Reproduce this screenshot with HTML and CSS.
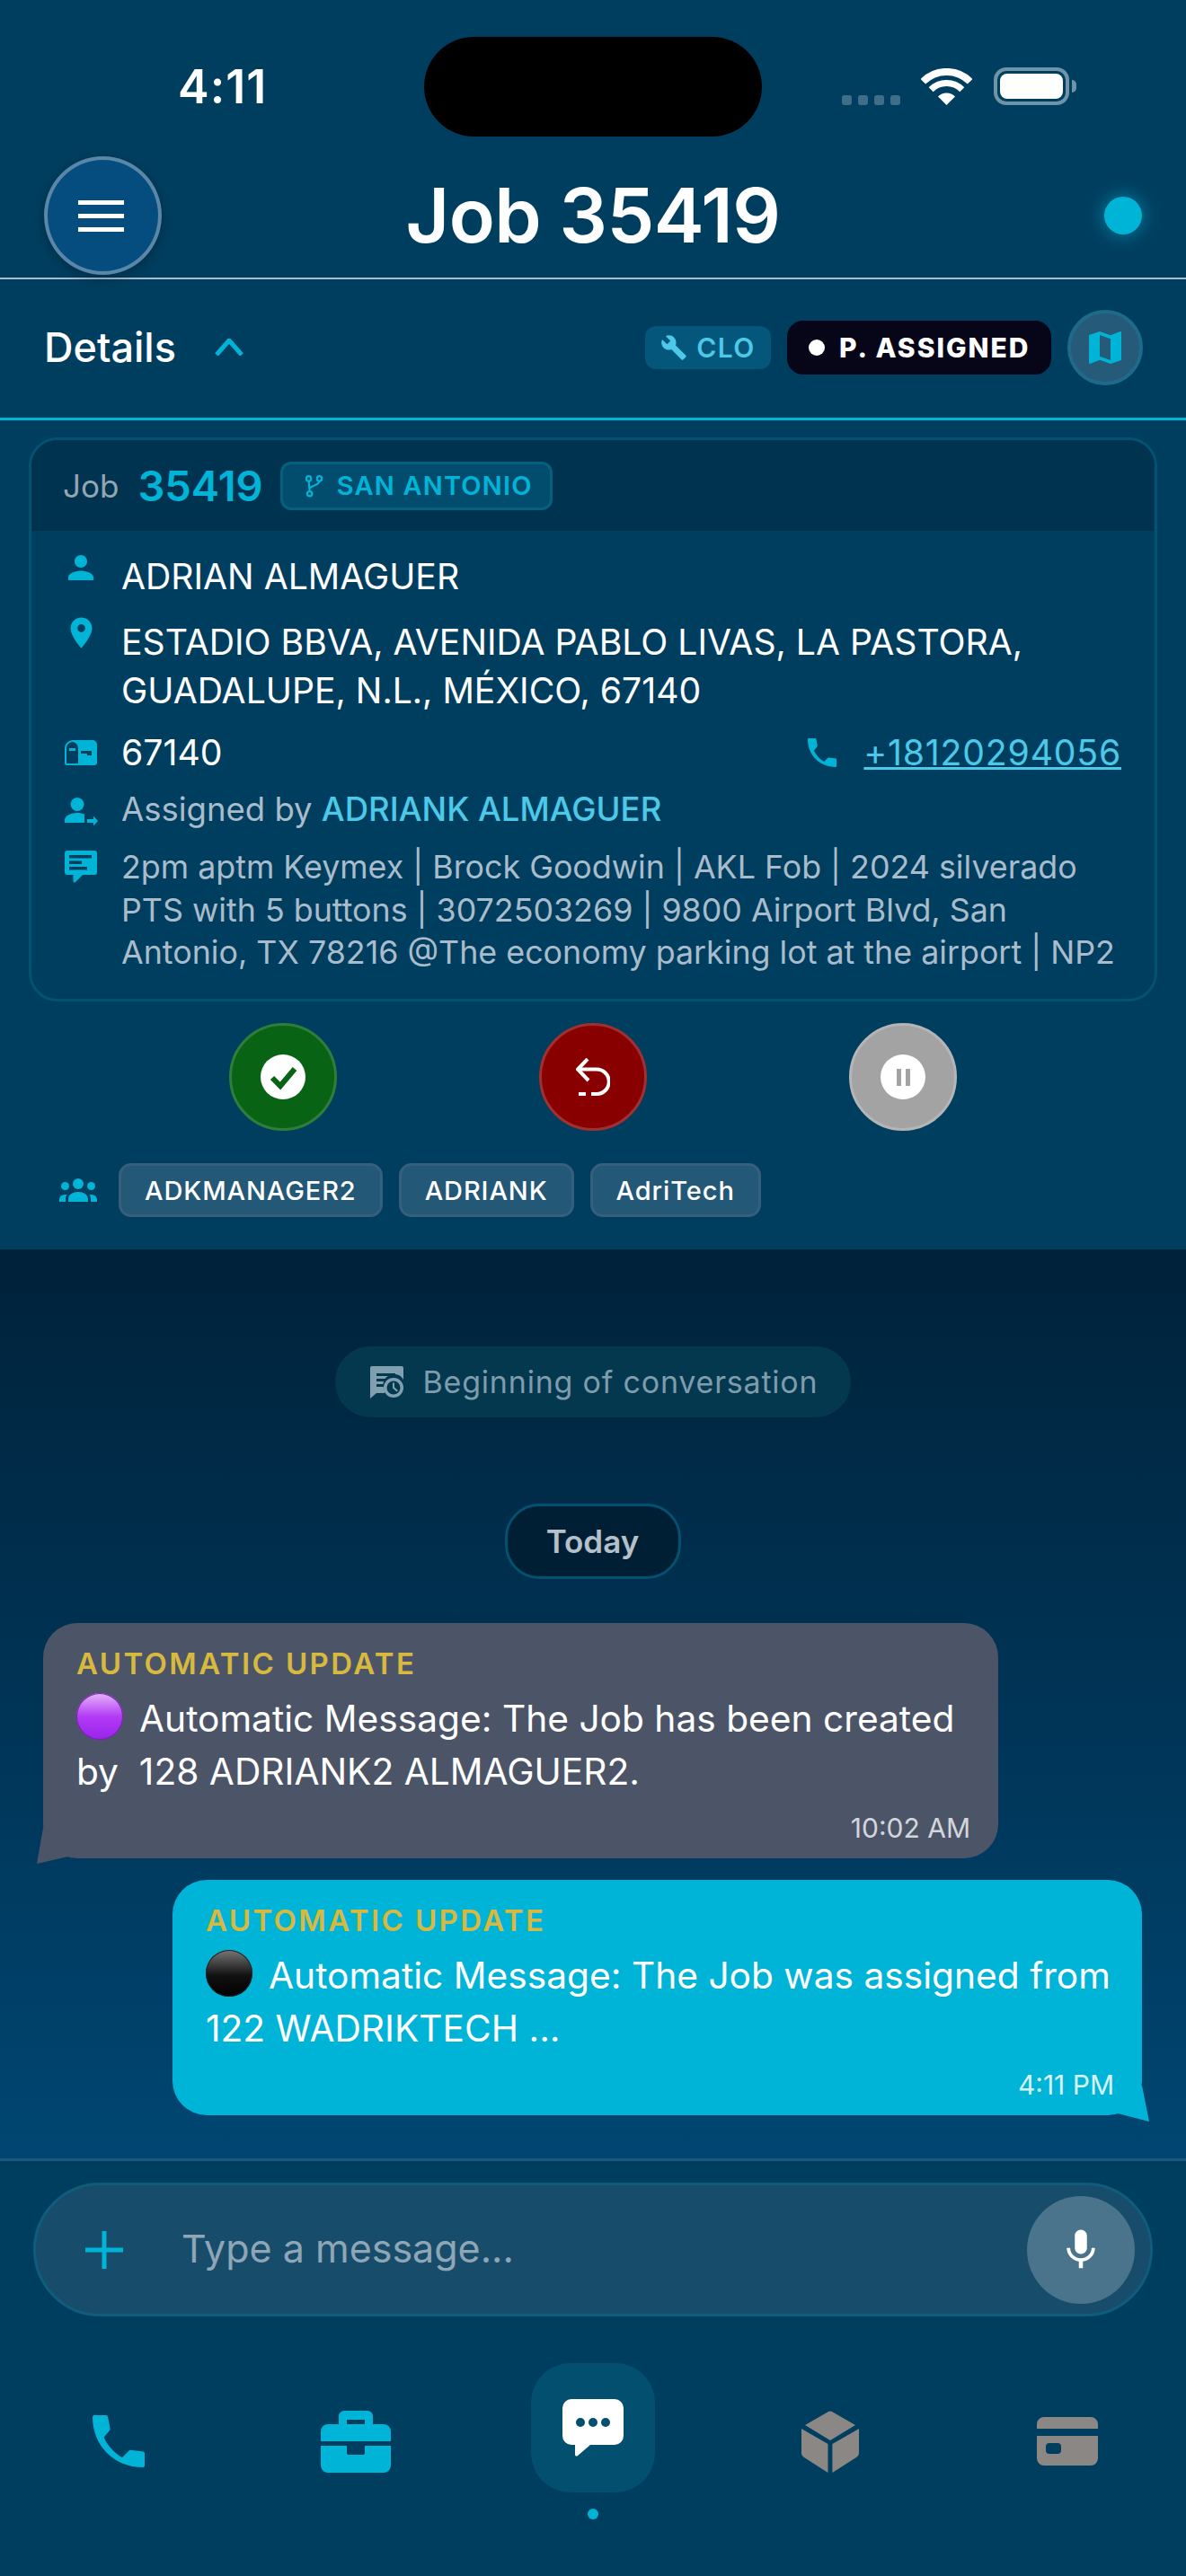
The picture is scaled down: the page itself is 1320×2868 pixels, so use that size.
FILE: index.html
```html
<!DOCTYPE html>
<html lang="en">
<head>
<meta charset="utf-8">
<title>Job 35419</title>
<link rel="stylesheet" href="styles.css">
</head>
<body>
<svg class="defs" width="0" height="0" aria-hidden="true">
  <symbol id="i-phone" viewBox="0 0 58 58"><path d="M2 0H15a2 2 0 0 1 2 1.7L19.500 14.500c.2 1-.1 2-.8 2.700L12.700 24.500C16 33 24 42 33 47l7.500-7.500c.6-.6 1.400-.8 2.200-.7l13.500 1.800c1 .1 1.800 1 1.800 2V56a2 2 0 0 1-2 2C24 58 0 34 0 2a2 2 0 0 1 2-2z"/></symbol>
</svg>

<div class="status">
  <div class="status-left"><span class="clock">4:11</span></div>
  <div class="notch"></div>
  <div class="status-right">
    <div class="signal"><i></i><i></i><i></i><i></i></div>
    <svg class="wifi" viewBox="0 0 57 41"><path d="M2.300 14.800A37 37 0 0 1 54.700 14.800" fill="none" stroke="#fff" stroke-width="8"/><path d="M11.200 23.700A24.500 24.500 0 0 1 45.800 23.700" fill="none" stroke="#fff" stroke-width="7"/><path d="M28.500 41L19 31.500A13.500 13.500 0 0 1 38 31.500Z" fill="#fff"/></svg>
    <div class="battery"><div class="battery-fill"></div></div>
    <div class="battery-cap"></div>
  </div>
</div>

<header class="topbar">
  <button class="menu-btn" aria-label="Menu"><span></span><span></span><span></span></button>
  <h1 class="title">Job 35419</h1>
  <div class="live-dot"></div>
</header>

<section class="details-bar">
  <span class="details-label">Details</span>
  <svg class="chevron" viewBox="0 0 32 19"><path d="M2 18L16 2L30 18" fill="none" stroke="#00b4d8" stroke-width="5"/></svg>
  <div class="details-right">
    <span class="tag-clo">
      <svg class="icon-wrench" viewBox="0 0 24 24"><path d="M22.700 19l-9.100-9.100c.9-2.300.4-5-1.500-6.900-2-2-5-2.400-7.400-1.300L9 6 6 9 1.600 4.700C.4 7.100.9 10.100 2.900 12.100c1.900 1.900 4.600 2.400 6.900 1.500l9.100 9.100c.4.4 1 .4 1.400 0l2.300-2.300c.5-.4.500-1.100.1-1.400z"/></svg>
      CLO
    </span>
    <span class="tag-status"><i></i>P. ASSIGNED</span>
    <button class="map-btn" aria-label="Map"><svg viewBox="0 0 24 24"><path d="M20.500 3l-.16.03L15 5.100 9 3 3.360 4.900c-.21.07-.36.25-.36.48V20.500c0 .28.22.5.5.5l.16-.03L9 18.900l6 2.100 5.640-1.900c.21-.07.36-.25.36-.48V3.500c0-.28-.22-.5-.5-.5zM15 19l-6-2.110V5l6 2.110V19z"/></svg></button>
  </div>
</section>

<section class="panel">
  <article class="card">
    <div class="card-head">
      <span class="job-word">Job</span>
      <span class="job-num">35419</span>
      <span class="branch">
        <svg viewBox="0 0 24 24"><circle cx="7" cy="4.500" r="2.500"/><circle cx="18" cy="4.500" r="2.500"/><circle cx="8" cy="20" r="2.500"/><path d="M7 7L8 17.500M18 7C18 12 9 11 8 15"/></svg>
        SAN ANTONIO
      </span>
    </div>
    <div class="card-body">
      <div class="row row-name">
        <span class="ico"><svg width="42" height="42" viewBox="0 0 24 24"><path d="M12 12c2.210 0 4-1.790 4-4s-1.790-4-4-4-4 1.790-4 4 1.790 4 4 4zm0 2c-2.670 0-8 1.340-8 4v2h16v-2c0-2.660-5.330-4-8-4z"/></svg></span>
        <span class="t-main">ADRIAN ALMAGUER</span>
      </div>
      <div class="row row-addr">
        <span class="ico"><svg width="41" height="41" viewBox="0 0 24 24"><path d="M12 2C8.130 2 5 5.130 5 9c0 5.250 7 13 7 13s7-7.750 7-13c0-3.870-3.130-7-7-7zm0 9.500c-1.380 0-2.500-1.120-2.500-2.500s1.120-2.500 2.500-2.500 2.500 1.120 2.500 2.500-1.120 2.500-2.500 2.500z"/></svg></span>
        <span class="t-main">ESTADIO BBVA, AVENIDA PABLO LIVAS, LA PASTORA,<br>GUADALUPE, N.L., MÉXICO, 67140</span>
      </div>
      <div class="row row-zip">
        <span class="ico"><svg width="36" height="28" viewBox="0 0 36 28"><path d="M10 0H31a5 5 0 0 1 5 5V25a3 3 0 0 1-3 3H2a2 2 0 0 1-2-2V9a9 9 0 0 1 9-9z"/><path class="cut" d="M9 2a7 7 0 0 0-7 7V26H15V9a7 7 0 0 0-6-7z"/><path d="M5 9h7v3H5z"/><path class="cut" d="M18 12H30V17H25V15H18z"/></svg></span>
        <span class="t-main">67140</span>
        <span class="phone-wrap">
          <svg class="icon-phone-sm"><use href="#i-phone"/></svg>
          <a class="phone-link" href="#">+18120294056</a>
        </span>
      </div>
      <div class="row row-assign">
        <span class="ico"><svg width="37" height="32" viewBox="0 0 37 32"><circle cx="14" cy="7.500" r="7.500"/><path d="M0 28v-3c0-5 7-8 14-8 3.500 0 6 .6 8 1.600V28z"/><path d="M25 24H32V20.500L37 26L32 31.500V28H25z"/></svg></span>
        <span class="t-sub t-assign">Assigned by <span class="t-link">ADRIANK ALMAGUER</span></span>
      </div>
      <div class="row row-note">
        <span class="ico"><svg width="36" height="36" viewBox="0 0 36 36"><path d="M3 0H33a3 3 0 0 1 3 3V24a3 3 0 0 1-3 3H20L12 35c-1 1-2.500.4-2.500-1V27H3a3 3 0 0 1-3-3V3a3 3 0 0 1 3-3z"/><path class="cut" d="M5 5H30V8.500H5zM5 11.500H19V15H5zM5 18H25V21.500H5z"/></svg></span>
        <span class="t-sub t-note">2pm aptm Keymex | Brock Goodwin | AKL Fob | 2024 silverado<br>PTS with 5 buttons | 3072503269 | 9800 Airport Blvd, San<br>Antonio, TX 78216 @The economy parking lot at the airport | NP2</span>
      </div>
    </div>
  </article>

  <div class="actions">
    <button class="act act-ok" aria-label="Confirm"><span class="act-inner"><svg viewBox="0 0 50 50"><path d="M13 26L22 35L38 16" fill="none" stroke="#086314" stroke-width="6"/></svg></span></button>
    <button class="act act-back" aria-label="Decline"><svg viewBox="0 0 38 42"><path d="M13 1L2 12.500L14 25" fill="none" stroke="#fff" stroke-width="4"/><path d="M2 12.500H23a13.500 13.500 0 0 1 0 27.500H17" fill="none" stroke="#fff" stroke-width="4"/><path d="M3 38h8v4H3z" fill="#fff"/></svg></button>
    <button class="act act-hold" aria-label="Hold"><span class="act-inner"><i></i><i></i></span></button>
  </div>

  <div class="people">
    <svg class="icon-group" viewBox="0 0 42 26"><circle cx="21" cy="6" r="6"/><circle cx="6.500" cy="8.500" r="4.500"/><circle cx="35.500" cy="8.500" r="4.500"/><path d="M10 26v-3c0-5 5-8 11-8s11 3 11 8v3zM0 26v-2c0-4 3-6 7-6 .6 0 1 0 1.500.1-.9 1.300-1.500 3-1.500 4.900v3zM42 26v-2c0-4-3-6-7-6-.6 0-1 0-1.500.1.900 1.300 1.500 3 1.500 4.900v3z"/></svg>
    <span class="chip">ADKMANAGER2</span>
    <span class="chip">ADRIANK</span>
    <span class="chip">AdriTech</span>
  </div>
</section>

<main class="chat">
  <div class="chat-start">
    <svg viewBox="0 0 37 36"><path d="M2 0H35a2 2 0 0 1 2 2V15A12 12 0 0 0 16 27c0 1 .1 2 .4 3H7L0 36V2a2 2 0 0 1 2-2z"/><path class="cut" d="M7 8H28V11H7zM7 14H24V17H7zM7 20H16V23H7z"/><circle cx="26" cy="24" r="11"/><circle class="cut" cx="26" cy="24" r="7.500"/><path d="M25 18.500H27V23.500L31 27L29.500 28.500L25 24.500z"/></svg>
    <span>Beginning of conversation</span>
  </div>
  <div class="chat-day">Today</div>

  <div class="bubble bubble-in">
    <div class="b-label">AUTOMATIC UPDATE</div>
    <div class="b-text"><i class="orb orb-purple"></i>Automatic Message: The Job has been created<br>by&nbsp; 128 ADRIANK2 ALMAGUER2.</div>
    <div class="b-time">10:02 AM</div>
    <svg class="tail tail-in" viewBox="0 0 50 40"><path d="M7 0L0 40L35 32L50 34V0Z" fill="#4c5567"/></svg>
  </div>

  <div class="bubble bubble-out">
    <div class="b-label">AUTOMATIC UPDATE</div>
    <div class="b-text"><i class="orb orb-black"></i>Automatic Message: The Job was assigned from<br>122 WADRIKTECH ...</div>
    <div class="b-time">4:11 PM</div>
    <svg class="tail tail-out" viewBox="0 0 50 40"><path d="M42 0L50 40L15 31L0 33V0Z" fill="#00b4d8"/></svg>
  </div>
</main>

<footer class="bottom">
  <div class="composer">
    <svg class="plus" viewBox="0 0 42 42"><path d="M21 0V42M0 21H42" stroke="#00b4d8" stroke-width="5"/></svg>
    <span class="placeholder">Type a message...</span>
    <button class="mic" aria-label="Voice"><svg viewBox="0 0 24 24"><path d="M12 14c1.660 0 3-1.340 3-3V5c0-1.660-1.340-3-3-3S9 3.340 9 5v6c0 1.660 1.340 3 3 3zm5.300-3c0 3-2.540 5.100-5.300 5.100S6.700 14 6.700 11H5c0 3.410 2.720 6.230 6 6.720V21h2v-3.280c3.280-.48 6-3.300 6-6.720h-1.700z"/></svg></button>
  </div>
  <nav class="nav">
    <div class="nav-item"><svg class="n-phone on"><use href="#i-phone"/></svg></div>
    <div class="nav-item"><svg class="n-case on" viewBox="0 0 78 69"><path fill-rule="evenodd" d="M20 15V6a6 6 0 0 1 6-6H52a6 6 0 0 1 6 6V15H70a8 8 0 0 1 8 8V34H0V23a8 8 0 0 1 8-8zM29 15H49V10H29z"/><path d="M0 39H29V47a2 2 0 0 0 2 2H47a2 2 0 0 0 2-2V39H78V61a8 8 0 0 1-8 8H8a8 8 0 0 1-8-8z"/></svg></div>
    <div class="nav-item">
      <div class="nav-tile"><svg class="n-chat" viewBox="0 0 68 64"><path fill="#fff" d="M10 0H58a10 10 0 0 1 10 10V41a10 10 0 0 1-10 10H31L17 63c-1 1-3 .5-3-1V51H10A10 10 0 0 1 0 41V10A10 10 0 0 1 10 0z"/><circle cx="20" cy="26" r="5"/><circle cx="34" cy="26" r="5"/><circle cx="48" cy="26" r="5"/></svg></div>
      <div class="nav-dot"></div>
    </div>
    <div class="nav-item"><svg class="n-box off" viewBox="0 0 64 69"><path d="M30 1a4 4 0 0 1 4 0L60 16 32 33 4 16zM0 20L29.500 37V69L3 52c-2-1.300-3-3-3-5zM34.400 37L64 20V47c0 2-1 3.700-3 5L34.400 69z"/></svg></div>
    <div class="nav-item"><svg class="n-card off" viewBox="0 0 68 54"><path fill-rule="evenodd" d="M8 0H60a8 8 0 0 1 8 8V13H0V8a8 8 0 0 1 8-8zM0 21H68V46a8 8 0 0 1-8 8H8a8 8 0 0 1-8-8zM14 29a4 4 0 0 0-4 4V37a4 4 0 0 0 4 4H23a4 4 0 0 0 4-4V33a4 4 0 0 0-4-4z"/></svg></div>
  </nav>
</footer>
</body>
</html>
```

FILE: styles.css
```css
* { box-sizing: border-box; }
html, body { margin: 0; padding: 0; }
body {
  width: 1320px;
  height: 2868px;
  display: flex;
  flex-direction: column;
  background: #003e5f;
  color: #fff;
  font-family: Inter, "Liberation Sans", sans-serif;
  overflow: hidden;
}
button { border: 0; padding: 0; font: inherit; background: none; }
.defs { position: absolute; }

/* status */
.status { height: 170px; padding-top: 41px; display: flex; flex: none; }
.status-left { width: 472px; height: 111px; padding-left: 198px; display: flex; align-items: center; }
.clock { font-size: 52px; font-weight: 600; line-height: 1; letter-spacing: 1px; }
.notch { width: 376px; height: 111px; background: #000; border-radius: 56px; }
.status-right { height: 76px; padding-left: 89px; display: flex; align-items: flex-end; }
.signal { display: flex; gap: 7px; }
.signal i { width: 11px; height: 11px; border-radius: 3px; background: #3f6e88; }
.wifi { width: 57px; height: 41px; margin-left: 23px; display: block; }
.battery { width: 84px; height: 42px; margin-left: 24px; border: 4px solid #6f93a8; border-radius: 14px; padding: 3px; }
.battery-fill { width: 100%; height: 100%; background: #fff; border-radius: 8px; }
.battery-cap { width: 5px; height: 14px; margin: 0 0 14px 3px; background: #6f93a8; border-radius: 0 5px 5px 0; }

/* header */
.topbar { flex: none; height: 141px; padding: 4px 49px 3px; display: grid; grid-template-columns: 1fr auto 1fr; align-items: center; border-bottom: 2px solid #a9bccb; }
.menu-btn { width: 131px; height: 132px; border-radius: 50%; background: #064d7f; border: 4px solid #5a86a8; box-shadow: 0 4px 14px rgba(0,0,0,.25); display: flex; flex-direction: column; align-items: center; justify-content: center; gap: 10px; }
.menu-btn span { width: 51px; height: 5px; background: #fff; margin-right: 5px; }
.title { margin: 0; font-size: 84px; font-weight: 600; line-height: 1; letter-spacing: -.6px; }
.live-dot { justify-self: end; width: 42px; height: 42px; border-radius: 50%; background: #00b4d8; box-shadow: 0 0 18px 4px rgba(0,180,216,.4); }

/* details bar */
.details-bar { flex: none; height: 157px; padding: 0 48px 3px 49px; display: flex; align-items: center; border-bottom: 3px solid #00b4d8; }
.details-label { font-size: 45px; font-weight: 500; }
.chevron { width: 32px; height: 19px; margin-left: 43px; }
.details-right { margin-left: auto; display: flex; align-items: center; gap: 18px; }
.tag-clo { width: 140px; height: 48px; border-radius: 12px; background: #04567a; color: #4cc9e8; font-size: 30px; font-weight: 600; letter-spacing: 1.4px; display: flex; align-items: center; justify-content: center; gap: 10px; }
.icon-wrench { width: 30px; height: 30px; fill: #4cc9e8; }
.tag-status { width: 294px; height: 60px; border-radius: 18px; background: #070619; font-size: 30px; font-weight: 800; letter-spacing: 2px; display: flex; align-items: center; padding-left: 24px; white-space: nowrap; }
.tag-status i { width: 18px; height: 18px; border-radius: 50%; background: #fff; margin-right: 16px; }
.map-btn { width: 84px; height: 84px; border-radius: 50%; background: #255a78; border: 4px solid #1f6a8a; display: flex; align-items: center; justify-content: center; }
.map-btn svg { width: 48px; height: 48px; fill: #00b4d8; }

/* panel & card */
.panel { flex: none; height: 923px; padding: 19px 32px 36px; background: #003e5f; }
.card { height: 628px; border: 3px solid #045272; border-radius: 32px; overflow: hidden; }
.card-head { height: 101px; background: #003350; display: flex; align-items: center; padding: 0 0 0 35px; }
.job-word { font-size: 35px; color: #92a6b4; }
.job-num { font-size: 47px; font-weight: 600; color: #00b4d8; margin-left: 21px; }
.branch { height: 54px; margin-left: 19px; border-radius: 12px; background: #024d6d; border: 3px solid #05607f; color: #00b4d8; font-size: 29px; font-weight: 600; letter-spacing: 1.2px; display: flex; align-items: center; padding: 0 19px 0 21px; gap: 13px; }
.branch svg { width: 26px; height: 26px; fill: none; stroke: #00b4d8; stroke-width: 2; }
.card-body { padding: 24px 37px 0; }
.row { display: flex; align-items: flex-start; }
.row-addr { margin-top: 19px; }
.row-zip { margin-top: 15px; }
.row-assign { margin-top: 12px; }
.row-note { margin-top: 17px; }
.ico { flex: none; width: 36px; margin-right: 27px; display: flex; justify-content: center; }
.ico svg { fill: #00b4d8; display: block; flex: none; }
.ico svg .cut { fill: #003e5f; }
.row-name .ico { margin-top: -4px; }
.row-addr .ico { margin-top: -4px; }
.row-zip .ico { margin-top: 13px; }
.row-assign .ico { margin-top: 11px; }
.row-note .ico { margin-top: 5px; }
.t-main { font-size: 39.200px; line-height: 54px; font-weight: 400; white-space: nowrap; }
.t-sub { font-size: 35.800px; line-height: 47.500px; color: #a9bccb; white-space: nowrap; }
.t-assign { font-size: 36.500px; line-height: 48px; }
.t-link { color: #4cc9e8; font-weight: 500; }
.phone-wrap { margin-left: auto; display: flex; align-items: center; }
.icon-phone-sm { width: 32px; height: 32px; fill: #00b4d8; margin-right: 30px; }
.phone-link { font-size: 39.200px; line-height: 54px; color: #4cc9e8; font-weight: 400; letter-spacing: .8px; text-decoration: underline; text-decoration-thickness: 3px; }

.actions { margin-top: 24px; display: flex; justify-content: center; gap: 225px; }
.act { width: 120px; height: 120px; border-radius: 50%; display: flex; align-items: center; justify-content: center; }
.act-ok { background: #086314; border: 3px solid #2f7d3a; }
.act-back { background: #890000; border: 3px solid #a13030; }
.act-back svg { width: 38px; height: 42px; }
.act-hold { background: #a3a3a3; border: 3px solid #b5b5b5; }
.act-inner { width: 50px; height: 50px; border-radius: 50%; background: #fff; display: flex; align-items: center; justify-content: center; gap: 5px; }
.act-inner svg { width: 50px; height: 50px; }
.act-inner i { width: 5px; height: 19px; background: #a3a3a3; }

.people { margin-top: 36px; display: flex; align-items: center; gap: 18px; padding-left: 34px; }
.icon-group { width: 42px; height: 26px; fill: #00b4d8; margin-right: 6px; }
.chip { height: 60px; padding: 0 26px; border-radius: 14px; background: #235876; border: 3px solid #365f7c; font-size: 29px; font-weight: 500; letter-spacing: .9px; display: flex; align-items: center; }

/* chat */
.chat { flex: 1; min-height: 0; padding: 108px 49px 0 48px; background: linear-gradient(#00223a, #004672); display: flex; flex-direction: column; align-items: center; }
.chat-start { width: 574px; height: 79px; border-radius: 39px; background: #03384f; color: #7f9cac; font-size: 34px; letter-spacing: .8px; display: flex; align-items: center; padding-left: 39px; gap: 22px; white-space: nowrap; }
.chat-start svg { width: 37px; height: 36px; fill: #80a0b0; flex: none; }
.chat-start .cut { fill: #03384f; }
.chat-day { margin-top: 96px; width: 196px; height: 84px; border-radius: 38px; background: #001f35; border: 3px solid #02526f; color: #b5c0c8; font-size: 35px; font-weight: 600; display: flex; align-items: center; justify-content: center; }
.bubble { position: relative; height: 262px; border-radius: 38px; padding: 25px 31px 0 37px; align-self: flex-start; }
.bubble-in { margin-top: 49px; width: 1063px; background: #4c5567; }
.bubble-out { margin-top: 24px; width: 1079px; background: #00b4d8; align-self: flex-end; }
.b-label { height: 40px; line-height: 40px; color: #d8b93f; font-size: 33px; font-weight: 600; letter-spacing: 2.4px; }
.b-text { margin-top: 12px; font-size: 40.700px; line-height: 59px; white-space: nowrap; }
.b-time { position: relative; z-index: 1; margin-top: 15px; line-height: 36px; text-align: right; font-size: 30px; color: #d3d7dc; }
.bubble-out .b-time { color: #d8f1f7; }
.orb { display: inline-block; width: 52px; height: 52px; margin-right: 18px; border-radius: 50%; vertical-align: -9px; }
.orb-purple { background: linear-gradient(#e6b4fa, #b23cf5 50%, #9a22ec); box-shadow: inset 0 0 0 1px #7a20b0; }
.orb-black { background: linear-gradient(#777, #111 55%, #000); box-shadow: inset 0 0 0 1px #222; }
.tail { position: absolute; width: 50px; height: 40px; }
.tail-in { left: -7px; bottom: -6px; }
.tail-out { right: -8px; bottom: -7px; }

/* bottom */
.bottom { flex: none; height: 465px; border-top: 3px solid #1a5a78; padding-top: 24px; background: #003e5f; }
.composer { margin: 0 37px; height: 149px; border-radius: 75px; background: #174d6b; border: 3px solid #0f5c7c; display: flex; align-items: center; padding: 0 17px 0 55px; }
.plus { width: 42px; height: 42px; flex: none; }
.placeholder { margin-left: 65px; padding-bottom: 3px; flex: 1; color: #8ea6b5; font-size: 43px; }
.mic { width: 120px; height: 120px; border-radius: 50%; background: #4a738c; display: flex; align-items: center; justify-content: center; }
.mic svg { width: 54px; height: 54px; fill: #fff; }
.nav { margin-top: 52px; display: grid; grid-template-columns: repeat(5, 1fr); }
.nav-item { height: 174px; display: flex; flex-direction: column; align-items: center; justify-content: center; }
.on { fill: #00b4d8; }
.off { fill: #8a8785; }
.n-phone { width: 58px; height: 58px; }
.n-case { width: 78px; height: 69px; }
.n-box { width: 64px; height: 69px; }
.n-card { width: 68px; height: 54px; }
.nav-tile { width: 138px; height: 144px; border-radius: 44px; background: #024f6f; display: flex; align-items: center; justify-content: center; }
.n-chat { width: 68px; height: 64px; fill: #024f6f; }
.nav-dot { width: 12px; height: 12px; margin-top: 18px; border-radius: 50%; background: #00b4d8; }
```
